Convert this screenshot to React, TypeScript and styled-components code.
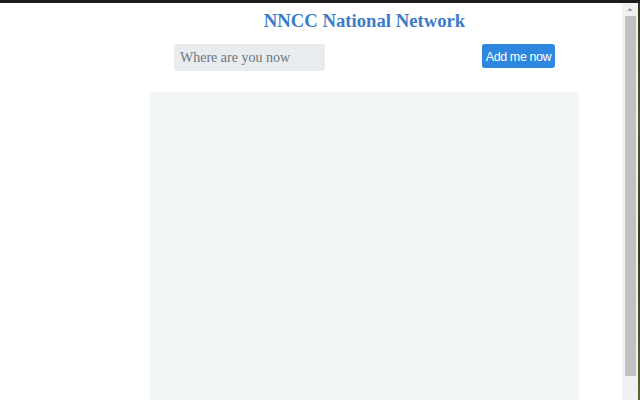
import React from "react";
import styled, { createGlobalStyle } from "styled-components";

const Global = createGlobalStyle`
  html, body { margin: 0; padding: 0; background: #ffffff; overflow: hidden; }
  body { font-family: "Liberation Serif", serif; }
`;

const Screen = styled.div`
  width: 640px;
  height: 400px;
  display: flex;
  flex-direction: column;
  overflow: hidden;
`;

const TopEdge = styled.div`
  height: 3px;
  flex: none;
  background: #1c1c1c;
`;

const Body = styled.div`
  flex: 1;
  display: flex;
  min-height: 0;
`;

const Page = styled.main`
  flex: 1;
  background: #ffffff;
  padding-left: 150px;
  padding-right: 43px;
  display: flex;
  flex-direction: column;
  min-width: 0;
`;

const Title = styled.h1`
  margin: 9px 0 0;
  text-align: center;
  font-family: "Liberation Serif", "DejaVu Serif", serif;
  font-weight: bold;
  font-size: 18.7px;
  line-height: 18px;
  color: #3a7cc7;
`;

const Controls = styled.div`
  display: flex;
  justify-content: space-between;
  align-items: flex-start;
  padding: 0 24px;
  margin-top: 14px;
`;

const Where = styled.input`
  width: 151px;
  height: 27px;
  box-sizing: border-box;
  border: none;
  border-radius: 3px;
  background: #e9ecef;
  padding: 1px 6px 0;
  font-family: "Liberation Serif", serif;
  font-size: 14px;
  color: #495057;
  outline: none;
  &::placeholder { color: #6c757d; }
`;

const AddButton = styled.button`
  width: 73px;
  height: 24px;
  box-sizing: border-box;
  border: none;
  border-radius: 3px;
  background: #2d87de;
  color: #ffffff;
  font-family: "Liberation Sans", Arial, sans-serif;
  font-size: 12.5px;
  padding: 2px 0 0;
  letter-spacing: -0.4px;
`;

const MapArea = styled.div`
  margin-top: 21px;
  height: 330px;
  flex: none;
  background: #f1f5f6;
  border-radius: 5px;
  box-shadow: 0 0 2px rgba(0, 0, 0, 0.04);
`;

const ScrollTrack = styled.div`
  width: 16px;
  flex: none;
  background: #f1f1f1;
  display: flex;
  flex-direction: column;
  align-items: center;
`;

const Arrow = styled.div`
  width: 0;
  height: 0;
  margin-top: 5px;
  border-left: 3px solid transparent;
  border-right: 3px solid transparent;
  border-bottom: 3px solid #a3a3a3;
`;

const Thumb = styled.div`
  margin-top: 5px;
  width: 11px;
  height: 360px;
  background: #c1c1c1;
`;

const Desktop = styled.div`
  width: 2px;
  flex: none;
  background: linear-gradient(180deg, #2c3a1f 0%, #4a5c2c 30%, #2f3d22 60%, #55692f 100%);
`;

export default function App() {
  return (
    <Screen>
      <Global />
      <TopEdge />
      <Body>
        <Page>
          <Title>NNCC National Network</Title>
          <Controls>
            <Where placeholder="Where are you now" />
            <AddButton>Add me now</AddButton>
          </Controls>
          <MapArea />
        </Page>
        <ScrollTrack>
          <Arrow />
          <Thumb />
        </ScrollTrack>
        <Desktop />
      </Body>
    </Screen>
  );
}
